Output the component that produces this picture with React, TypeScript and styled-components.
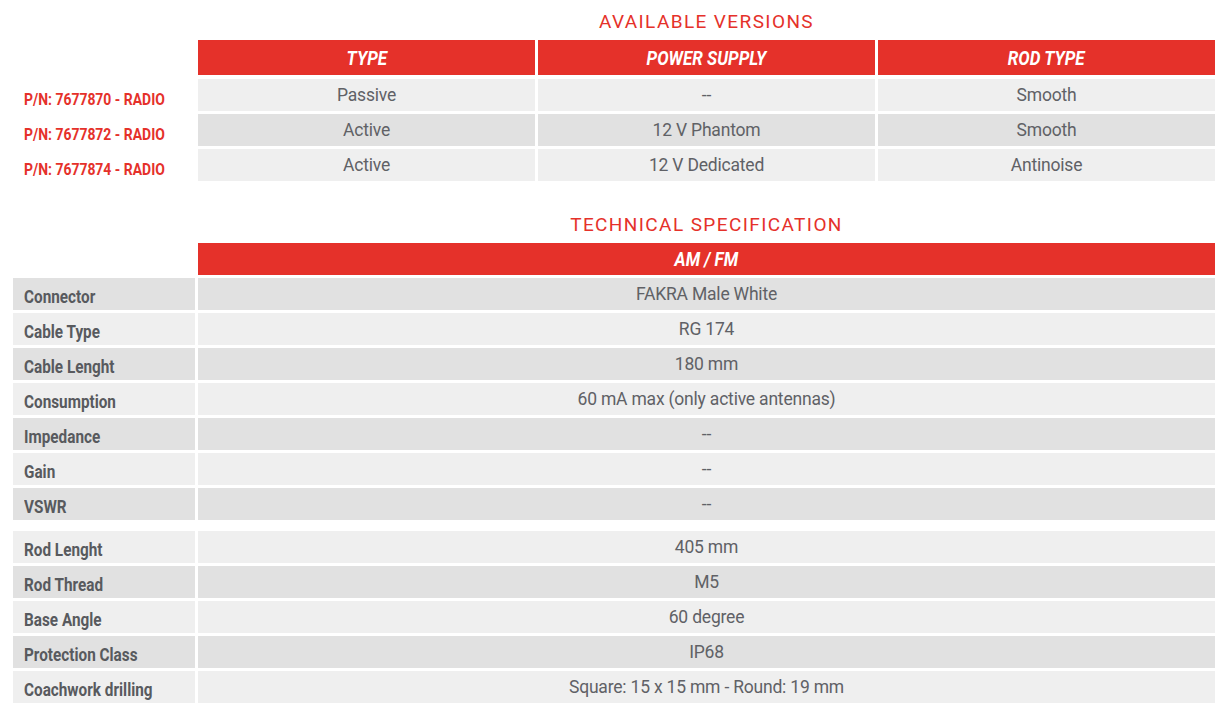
import { Fragment } from 'react';
import styled, { createGlobalStyle } from 'styled-components';

const GlobalStyle = createGlobalStyle`
  html, body {
    margin: 0;
    padding: 0;
    background: #ffffff;
  }
`;

const RED = '#e5312a';
const LIGHT = '#efefef';
const DARK = '#e1e1e1';

const Page = styled.div`
  width: 1202px;
  padding: 0 0 0 13px;
  font-family: 'Roboto', 'Liberation Sans', sans-serif;
`;

const Section = styled.section<{ $top: number }>`
  padding-top: ${(p) => p.$top}px;
`;

const Grid = styled.div<{ $cols: string }>`
  display: grid;
  grid-template-columns: ${(p) => p.$cols};
  column-gap: 3px;
  row-gap: 3px;
`;

const Title = styled.h2<{ $span: string }>`
  grid-column: ${(p) => p.$span};
  margin: 0;
  height: 27px;
  text-align: center;
  font-weight: 400;
  font-size: 19px;
  letter-spacing: 1.4px;
  color: ${RED};
  line-height: 23px;
`;

const Blank = styled.div``;

// no condensed face installed, so squeeze the bold face horizontally
const Narrow = styled.span<{ $center?: boolean; $scale?: number }>`
  display: inline-block;
  white-space: nowrap;
  transform: scaleX(${(p) => p.$scale ?? 0.85});
  transform-origin: ${(p) => (p.$center ? 'center' : 'left')} center;
`;

const HeadCell = styled.div<{ $h: number }>`
  height: ${(p) => p.$h}px;
  background: ${RED};
  color: #ffffff;
  display: flex;
  align-items: center;
  justify-content: center;
  font-weight: 700;
  font-style: italic;
  font-size: 20px;
  margin-bottom: ${(p) => (p.$h > 33 ? 1 : 0)}px;
`;

const PartNo = styled.div`
  height: 32px;
  display: flex;
  align-items: center;
  padding: 8px 0 0 11px;
  box-sizing: border-box;
  font-weight: 700;
  font-size: 17px;
  color: ${RED};
`;

const Label = styled.div<{ $dark: boolean }>`
  height: 32px;
  display: flex;
  align-items: center;
  padding: 5px 0 0 11px;
  box-sizing: border-box;
  background: ${(p) => (p.$dark ? DARK : LIGHT)};
  font-weight: 700;
  font-size: 18px;
  color: #585a5e;
`;

const Value = styled.div<{ $dark: boolean }>`
  height: 32px;
  display: flex;
  align-items: center;
  justify-content: center;
  padding-bottom: 1px;
  box-sizing: border-box;
  background: ${(p) => (p.$dark ? DARK : LIGHT)};
  font-size: 17.5px;
  letter-spacing: -0.2px;
  color: #606166;
`;

const Spacer = styled.div`
  grid-column: 1 / -1;
  height: 5px;
`;

const versions = [
  { pn: 'P/N: 7677870 - RADIO', cells: ['Passive', '--', 'Smooth'] },
  { pn: 'P/N: 7677872 - RADIO', cells: ['Active', '12 V Phantom', 'Smooth'] },
  { pn: 'P/N: 7677874 - RADIO', cells: ['Active', '12 V Dedicated', 'Antinoise'] },
];

const electrical: [string, string][] = [
  ['Connector', 'FAKRA Male White'],
  ['Cable Type', 'RG 174'],
  ['Cable Lenght', '180 mm'],
  ['Consumption', '60 mA max (only active antennas)'],
  ['Impedance', '--'],
  ['Gain', '--'],
  ['VSWR', '--'],
];

const mechanical: [string, string][] = [
  ['Rod Lenght', '405 mm'],
  ['Rod Thread', 'M5'],
  ['Base Angle', '60 degree'],
  ['Protection Class', 'IP68'],
  ['Coachwork drilling', 'Square: 15 x 15 mm - Round: 19 mm'],
];

export default function App() {
  return (
    <Page>
      <GlobalStyle />
      <Section $top={10}>
        <Grid $cols="182px repeat(3, 337px)">
          <Title $span="2 / 5">AVAILABLE VERSIONS</Title>
          <Blank />
          {['TYPE', 'POWER SUPPLY', 'ROD TYPE'].map((h) => (
            <HeadCell key={h} $h={35}>
              <Narrow $center>{h}</Narrow>
            </HeadCell>
          ))}
          {versions.map((v, i) => (
            <Fragment key={v.pn}>
              <PartNo>
                <Narrow $scale={0.82}>{v.pn}</Narrow>
              </PartNo>
              {v.cells.map((c, j) => (
                <Value key={j} $dark={i % 2 === 1}>
                  {c}
                </Value>
              ))}
            </Fragment>
          ))}
        </Grid>
      </Section>
      <Section $top={32}>
        <Grid $cols="182px 1017px">
          <Title $span="2 / 3">TECHNICAL SPECIFICATION</Title>
          <Blank />
          <HeadCell $h={32}>
            <Narrow $center>AM / FM</Narrow>
          </HeadCell>
          {electrical.map(([k, v], i) => (
            <Fragment key={k}>
              <Label $dark={i % 2 === 0}>
                <Narrow>{k}</Narrow>
              </Label>
              <Value $dark={i % 2 === 0}>{v}</Value>
            </Fragment>
          ))}
          <Spacer />
          {mechanical.map(([k, v], i) => (
            <Fragment key={k}>
              <Label $dark={i % 2 === 1}>
                <Narrow>{k}</Narrow>
              </Label>
              <Value $dark={i % 2 === 1}>{v}</Value>
            </Fragment>
          ))}
        </Grid>
      </Section>
    </Page>
  );
}
